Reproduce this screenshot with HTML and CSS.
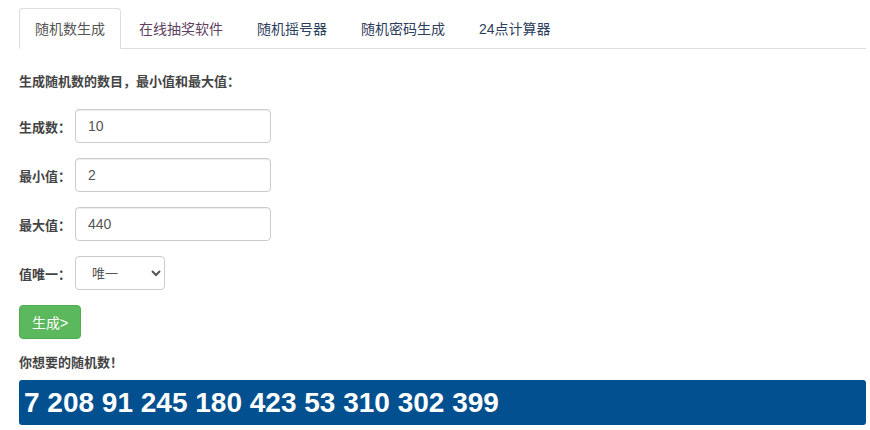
FILE: index.html
```html
<!DOCTYPE html>
<html lang="zh-CN">
<head>
  <meta charset="UTF-8" />
  <title>随机数生成</title>
  <link rel="stylesheet" href="styles.css">
</head>
<body>
  <div class="container">
    <ul class="nav-tabs">
      <li class="active"><a href="#">随机数生成</a></li>
      <li><a href="#" class="visited">在线抽奖软件</a></li>
      <li><a href="#">随机摇号器</a></li>
      <li><a href="#">随机密码生成</a></li>
      <li><a href="#">24点计算器</a></li>
    </ul>

    <p class="intro">生成随机数的数目，最小值和最大值：</p>

    <form class="gen-form" onsubmit="return false;">
      <div class="form-row">
        <label>生成数：</label>
        <input type="text" class="form-control" value="10">
      </div>
      <div class="form-row">
        <label>最小值：</label>
        <input type="text" class="form-control" value="2">
      </div>
      <div class="form-row">
        <label>最大值：</label>
        <input type="text" class="form-control" value="440">
      </div>
      <div class="form-row">
        <label>值唯一：</label>
        <select class="form-select">
          <option>唯一</option>
          <option>可重复</option>
        </select>
      </div>
      <div class="form-row">
        <button class="btn-success">生成&gt;</button>
      </div>
    </form>

    <p class="result-label">你想要的随机数！</p>
    <div class="result">7 208 91 245 180 423 53 310 302 399</div>
  </div>
</body>
</html>
```

FILE: styles.css
```css
body {
  margin: 0;
  font-family: "Liberation Sans", "Noto Sans CJK SC", sans-serif;
  font-size: 14px;
  color: #333;
  background: #fff;
}

.container {
  padding: 8px 4px 0 19px;
}

.nav-tabs {
  list-style: none;
  margin: 0;
  padding: 0;
  display: flex;
  border-bottom: 1px solid #ddd;
}

.nav-tabs li {
  margin-right: 2px;
  margin-bottom: -1px;
}

.nav-tabs a {
  display: block;
  padding: 10px 15px 9px;
  line-height: 20px;
  border: 1px solid transparent;
  border-radius: 4px 4px 0 0;
  text-decoration: none;
  color: #2c3e5c;
}

.nav-tabs a.visited {
  color: #5e3f62;
}

.nav-tabs .active a {
  color: #555;
  background: #fff;
  border-color: #ddd #ddd transparent;
}

.intro {
  margin: 23px 0 17px;
  font-size: 13px;
  font-weight: bold;
  color: #444;
  line-height: 20px;
}

.form-row {
  display: flex;
  align-items: center;
  margin-bottom: 15px;
}

.form-row label {
  width: 56px;
  font-size: 13px;
  font-weight: bold;
  color: #444;
}

.form-control {
  box-sizing: border-box;
  width: 196px;
  height: 34px;
  padding: 6px 12px;
  font-family: inherit;
  font-size: 14px;
  color: #555;
  border: 1px solid #ccc;
  border-radius: 4px;
  box-shadow: inset 0 1px 1px rgba(0, 0, 0, 0.075);
}

.form-select {
  box-sizing: border-box;
  width: 90px;
  height: 34px;
  padding: 6px 10px 6px 12px;
  font-family: inherit;
  font-size: 13px;
  color: #555;
  background: #fff;
  border: 1px solid #ccc;
  border-radius: 4px;
}

.btn-success {
  height: 34px;
  padding: 6px 12px;
  font-family: inherit;
  font-size: 14px;
  color: #fff;
  background: #5cb85c;
  border: 1px solid #4cae4c;
  border-radius: 4px;
  cursor: pointer;
}

.gen-form .form-row:last-child {
  margin-bottom: 14px;
}

.result-label {
  margin: 0 0 7px;
  font-size: 13px;
  font-weight: bold;
  color: #444;
  line-height: 20px;
}

.result {
  padding: 5px 5px;
  height: 35px;
  line-height: 35px;
  background: #02508f;
  border-radius: 3px;
  color: #fff;
  font-size: 28px;
  font-weight: bold;
}
```
